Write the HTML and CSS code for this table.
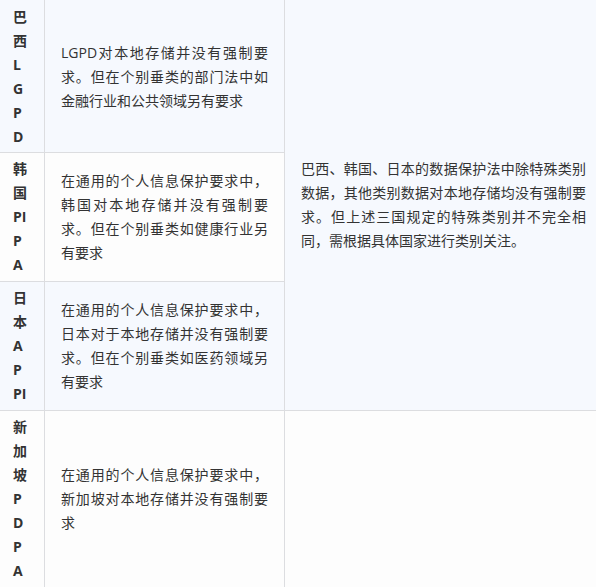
FILE: index.html
```html
<!DOCTYPE html>
<html lang="zh-CN">
<head>
<meta charset="utf-8">
<title>数据本地化要求</title>
<link rel="stylesheet" href="styles.css">
</head>
<body>
<table class="law-table">
  <colgroup>
    <col class="col-name">
    <col class="col-desc">
    <col class="col-sum">
  </colgroup>
  <tbody>
    <tr class="row-alt row-first">
      <td class="name">巴西LGPD</td>
      <td class="desc">LGPD对本地存储并没有强制要求。但在个别垂类的部门法中如金融行业和公共领域另有要求</td>
      <td class="desc summary" rowspan="3">巴西、韩国、日本的数据保护法中除特殊类别数据，其他类别数据对本地存储均没有强制要求。但上述三国规定的特殊类别并不完全相同，需根据具体国家进行类别关注。</td>
    </tr>
    <tr class="row-plain">
      <td class="name">韩国PIPA</td>
      <td class="desc">在通用的个人信息保护要求中，韩国对本地存储并没有强制要求。但在个别垂类如健康行业另有要求</td>
    </tr>
    <tr class="row-alt">
      <td class="name">日本APPI</td>
      <td class="desc">在通用的个人信息保护要求中，日本对于本地存储并没有强制要求。但在个别垂类如医药领域另有要求</td>
    </tr>
    <tr class="row-plain">
      <td class="name">新加坡PDPA</td>
      <td class="desc">在通用的个人信息保护要求中，新加坡对本地存储并没有强制要求</td>
      <td class="desc"></td>
    </tr>
  </tbody>
</table>
</body>
</html>
```
FILE: styles.css
```css
html, body {
  margin: 0;
  padding: 0;
  overflow: hidden;
  background: #fdfdfd;
}

.law-table {
  border-collapse: separate;
  border-spacing: 0;
  table-layout: fixed;
  width: 603px;
  font-family: "Open Sans", "Noto Sans CJK SC", sans-serif;
  font-size: 14px;
  line-height: 24px;
  color: #333333;
}

.col-name { width: 45px; }
.col-desc { width: 240px; }
.col-sum { width: 318px; }

.law-table td {
  box-sizing: border-box;
  border-right: 1px solid #dcdde0;
  border-bottom: 1px solid #dcdde0;
  vertical-align: middle;
}

.row-alt td { background: #f6f9fe; }
.row-plain td { background: #fdfdfd; }

.name {
  padding: 4px 15px 4px 13px;
  font-weight: 700;
  word-break: break-all;
  text-align: left;
}

.desc {
  padding: 4px 16px;
  text-align: justify;
}

.row-first td {
  padding-top: 5px;
  padding-bottom: 3px;
}

.row-first td.summary {
  padding-top: 4px;
  padding-bottom: 4px;
}
```
